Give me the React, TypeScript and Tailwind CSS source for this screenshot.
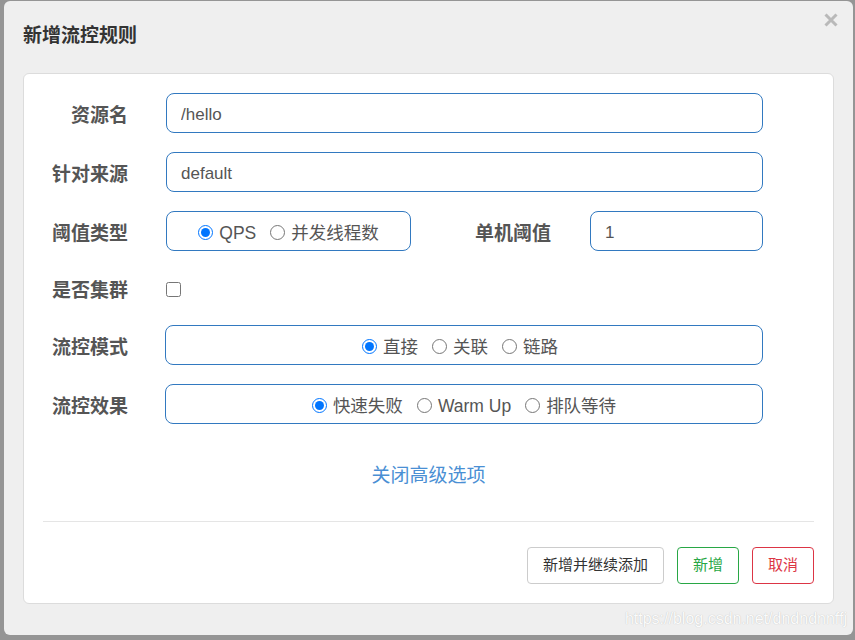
import React from "react";

const font = "font-['Liberation_Sans','Noto_Sans_CJK_SC',sans-serif]";

function Radio({ label, checked, name }: { label: string; checked?: boolean; name: string }) {
  return (
    <label className="flex items-center gap-[6px]">
      <input type="radio" name={name} defaultChecked={checked} className="w-[15px] h-[15px] m-0 -translate-y-[1px]" />
      <span>{label}</span>
    </label>
  );
}

export default function App() {
  const labelCls = "w-[85px] shrink-0 text-right font-bold text-[19px] text-[#555] pt-[7px]";
  const inputCls =
    "h-[40px] rounded-[8px] border border-[#3279c0] bg-white px-[14px] pt-[3px] text-[17px] text-[#555] outline-none";
  const boxCls =
    "h-[40px] rounded-[8px] border border-[#3279c0] flex items-center justify-center gap-[14px] pt-[4px] text-[17.5px] text-[#555]";

  return (
    <div className={`${font} w-[855px] h-[640px] bg-[#959595] pt-[1px] pl-[4px] overflow-hidden`}>
      <div className="relative w-[849px] h-[634px] bg-[#efefef] rounded-[6px]">
        {/* header */}
        <div className="h-[72px] pt-[22px] pl-[19px]">
          <h3 className="text-[19px] leading-[25px] font-bold text-[#333]">新增流控规则</h3>
        </div>
        <button className="absolute top-[12px] right-[15px] w-[14px] h-[14px]">
          <svg viewBox="0 0 14 14" className="w-[14px] h-[14px]">
            <path d="M1.5 1.5L12.5 12.5M12.5 1.5L1.5 12.5" stroke="#b9b9b9" strokeWidth="3" />
          </svg>
        </button>

        {/* body panel */}
        <div className="ml-[19px] w-[811px] h-[531px] bg-white border border-[#dcdcdc] rounded-[6px] pt-[19px] px-[19px]">
          <div className="flex items-center mb-[19px]">
            <div className={labelCls}>资源名</div>
            <input className={`${inputCls} ml-[38px] w-[597px]`} defaultValue="/hello" />
          </div>
          <div className="flex items-center mb-[19px]">
            <div className={labelCls}>针对来源</div>
            <input className={`${inputCls} ml-[38px] w-[597px]`} defaultValue="default" />
          </div>
          <div className="flex items-center mb-[19px]">
            <div className={labelCls}>阈值类型</div>
            <div className={`${boxCls} ml-[38px] w-[245px]`}>
              <Radio name="grade" label="QPS" checked />
              <Radio name="grade" label="并发线程数" />
            </div>
            <div className="w-[140px] shrink-0 text-right font-bold text-[19px] text-[#555] pt-[7px]">单机阈值</div>
            <input className={`${inputCls} ml-[39px] w-[173px]`} defaultValue="1" />
          </div>
          <div className="flex items-center h-[36px] mb-[19px]">
            <div className={labelCls}>是否集群</div>
            <input type="checkbox" className="ml-[38px] w-[15px] h-[15px] m-0 translate-y-[1px]" />
          </div>
          <div className="flex items-center mb-[19px]">
            <div className={labelCls}>流控模式</div>
            <div className={`${boxCls} ml-[37px] w-[598px] pr-[8px]`}>
              <Radio name="strategy" label="直接" checked />
              <Radio name="strategy" label="关联" />
              <Radio name="strategy" label="链路" />
            </div>
          </div>
          <div className="flex items-center">
            <div className={labelCls}>流控效果</div>
            <div className={`${boxCls} ml-[37px] w-[598px]`}>
              <Radio name="behavior" label="快速失败" checked />
              <Radio name="behavior" label="Warm Up" />
              <Radio name="behavior" label="排队等待" />
            </div>
          </div>

          <div className="mt-[37px] h-[28px] flex items-center justify-center pt-[2px]">
            <a className="text-[19px] text-[#4a8fd4] cursor-pointer">关闭高级选项</a>
          </div>

          <div className="mt-[32px] border-t border-[#e5e5e5]" />

          <div className="mt-[25px] flex justify-end gap-[13px] text-[15px]">
            <button className="h-[37px] w-[137px] rounded-[4px] border border-[#cccccc] text-[#333]">新增并继续添加</button>
            <button className="h-[37px] w-[62px] rounded-[4px] border border-[#28a745] text-[#28a745]">新增</button>
            <button className="h-[37px] w-[62px] rounded-[4px] border border-[#dc3545] text-[#dc3545]">取消</button>
          </div>
        </div>

        <div className="absolute right-[6px] bottom-[4px] text-[16px] text-[#fbfbfb] [text-shadow:0_0_1px_#b5b5b5]">
          https://blog.csdn.net/dndndnnffj
        </div>
      </div>
    </div>
  );
}
